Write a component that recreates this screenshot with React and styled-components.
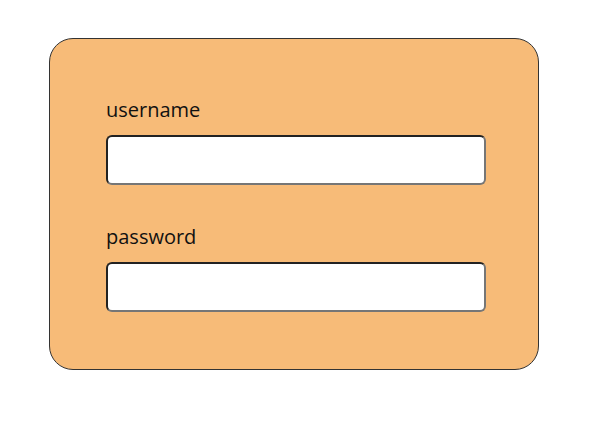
import React from 'react'
import styled, { createGlobalStyle } from 'styled-components'

const GlobalStyle = createGlobalStyle`
    body {
        margin:0;
        background-color:#ffffff;
        font-family:'Open Sans', 'Liberation Sans', sans-serif;
    }
`;

const Page = styled.div`
    padding-top:38px;
    padding-left:49px;
`;

const Card = styled.form`
    box-sizing:border-box;
    width:490px;
    background-color:#f7bb78;
    border:1px solid #333333;
    border-radius:24px;
    padding:57px 56px 57px;
    display:flex;
    flex-direction:column;
`;

const Field = styled.div`
    display:flex;
    flex-direction:column;
    gap:12px;
    margin-top:${props => props.$first ? '0' : '38px'};
`;

const Label = styled.label`
    font-size:20px;
    color:#111111;
`;

const Input = styled.input`
    box-sizing:border-box;
    width:380px;
    height:50px;
    margin:0;
    padding:0 2px;
    font-size:16px;
    font-family:'Open Sans', 'Liberation Sans', sans-serif;
    background-color:#ffffff;
    border:2px solid;
    border-color:#222222 #767676 #767676 #222222;
    border-radius:6px;
    outline:none;
`;

const App = () => {
  return (
    <Page>
        <GlobalStyle />
        <Card onSubmit={e => e.preventDefault()}>
            <Field $first>
                <Label htmlFor="username">username</Label>
                <Input id="username" type="text" autoFocus />
            </Field>
            <Field>
                <Label htmlFor="password">password</Label>
                <Input id="password" type="password" />
            </Field>
        </Card>
    </Page>
  )
}

export default App
